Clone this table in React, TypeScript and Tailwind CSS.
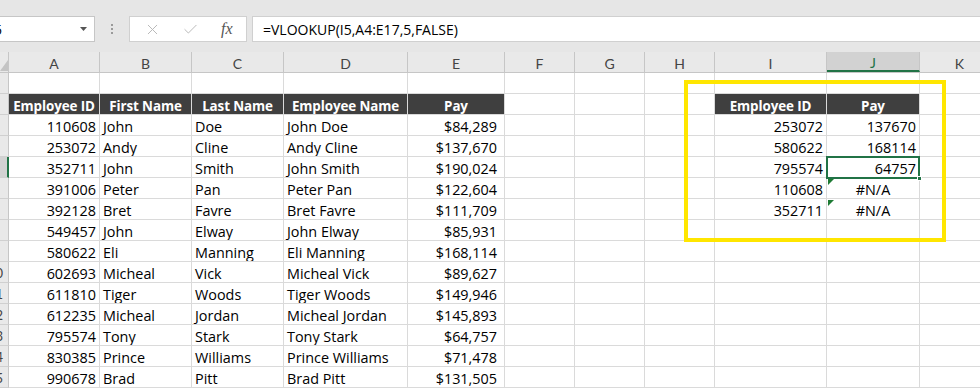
import { X, Check } from "lucide-react";

const data: (string | number)[][] = [
  [110608, "John", "Doe", "John Doe", "$84,289"],
  [253072, "Andy", "Cline", "Andy Cline", "$137,670"],
  [352711, "John", "Smith", "John Smith", "$190,024"],
  [391006, "Peter", "Pan", "Peter Pan", "$122,604"],
  [392128, "Bret", "Favre", "Bret Favre", "$111,709"],
  [549457, "John", "Elway", "John Elway", "$85,931"],
  [580622, "Eli", "Manning", "Eli Manning", "$168,114"],
  [602693, "Micheal", "Vick", "Micheal Vick", "$89,627"],
  [611810, "Tiger", "Woods", "Tiger Woods", "$149,946"],
  [612235, "Micheal", "Jordan", "Micheal Jordan", "$145,893"],
  [795574, "Tony", "Stark", "Tony Stark", "$64,757"],
  [830385, "Prince", "Williams", "Prince Williams", "$71,478"],
  [990678, "Brad", "Pitt", "Brad Pitt", "$131,505"],
];

const lookup: [number, string][] = [
  [253072, "137670"],
  [580622, "168114"],
  [795574, "64757"],
  [110608, "#N/A"],
  [352711, "#N/A"],
];

// column widths A..K
const widths = [
  "w-[91px]",
  "w-[92px]",
  "w-[92px]",
  "w-[124px]",
  "w-[97px]",
  "w-[70px]",
  "w-[70px]",
  "w-[70px]",
  "w-[112px]",
  "w-[93px]",
  "w-[80px]",
];
const letters = ["A", "B", "C", "D", "E", "F", "G", "H", "I", "J", "K"];

function Cell({
  col,
  text,
  kind,
}: {
  col: number;
  text?: string | number;
  kind?: "head" | "num" | "text" | "money" | "center";
}) {
  const base = `${widths[col]} shrink-0 h-full border-r border-b flex items-center pt-[4px] overflow-hidden whitespace-nowrap`;
  if (kind === "head") {
    return (
      <div className={`${base} border-[#d9d9d9] bg-[#3f3f3f] justify-center text-white font-bold text-[13.4px] tracking-[-0.1px]`}>
        {text}
      </div>
    );
  }
  let align = "justify-start pl-[3px]";
  if (kind === "num") align = "justify-end pr-[3px]";
  if (kind === "money") align = "justify-end pr-[7px]";
  if (kind === "center") align = "justify-center";
  return (
    <div className={`${base} border-[#dadada] text-[14.4px] text-black ${align}`}>
      {text}
    </div>
  );
}

function RowHead({ n, active }: { n: number; active?: boolean }) {
  return (
    <div
      className={`w-[9px] shrink-0 h-full border-b border-[#d0d0d0] overflow-hidden flex items-center pt-[3px] text-[13px] text-[#444] font-['Lato',sans-serif] ${
        active ? "bg-[#d2d2d2] border-r-2 border-r-[#217346]" : "bg-[#e9e9e9] border-r border-r-[#c6c6c6]"
      }`}
    >
      <span className="-ml-[12px]">{n}</span>
    </div>
  );
}

export default function App() {
  return (
    <div className="w-[980px] h-[388px] overflow-hidden bg-white font-['Open_Sans',sans-serif] select-none">
      {/* Formula bar */}
      <div className="h-[52px] bg-[#e6e6e6] border-t-[16px] border-[#e6e6e6] flex flex-col">
        <div className="h-[26px] flex items-stretch">
          <div className="w-[95px] bg-white border border-l-0 border-[#c6c6c6] flex items-center justify-between overflow-hidden">
            <span className="-ml-[6px] text-[14px] text-black">5</span>
            <svg width="7" height="4" viewBox="0 0 7 4" className="mr-[7px]">
              <path d="M0 0 L7 0 L3.5 4 Z" fill="#555" />
            </svg>
          </div>
          <div className="w-[34px] flex flex-col items-center justify-center gap-[2px]">
            <div className="w-[2px] h-[2px] bg-[#9a9a9a]" />
            <div className="w-[2px] h-[2px] bg-[#9a9a9a]" />
            <div className="w-[2px] h-[2px] bg-[#9a9a9a]" />
          </div>
          <div className="w-[118px] bg-white border border-[#d0d0d0] flex items-center">
            <X className="ml-[14px] text-[#b9b9b9]" size={17} strokeWidth={1.4} />
            <Check className="ml-[21px] text-[#b9b9b9]" size={17} strokeWidth={1.4} />
            <span className="ml-[22px] font-['Liberation_Serif',serif] italic text-[16px] text-[#555]">
              fx
            </span>
          </div>
          <div className="ml-[5px] flex-1 bg-white border border-r-0 border-[#d0d0d0] flex items-center pl-[10px] text-[14px] text-black">
            =VLOOKUP(I5,A4:E17,5,FALSE)
          </div>
        </div>
      </div>

      {/* Sheet */}
      <div className="relative">
        {/* column headers */}
        <div className="h-[21px] flex bg-[#e9e9e9] border-b border-[#c6c6c6] font-['Lato',sans-serif]">
          <div className="w-[9px] shrink-0 h-full border-r border-[#c6c6c6] relative overflow-hidden">
            <svg width="9" height="21" className="absolute left-0 top-0">
              <path d="M0 19 L8 19 L8 8 Z" fill="#c4c4c4" />
            </svg>
          </div>
          {letters.map((l, i) => (
            <div
              key={l}
              className={`${widths[i]} shrink-0 h-full flex items-center justify-center pt-[3px] text-[14px] ${
                i === 9
                  ? "bg-[#d2d2d2] border-b-2 border-[#217346] text-[#217346] border-r border-r-[#c6c6c6]"
                  : "text-[#444] border-r border-[#c6c6c6]"
              }`}
            >
              {l}
            </div>
          ))}
        </div>

        {/* row 1 blank */}
        <div className="h-[21px] flex">
          <RowHead n={1} />
          {letters.map((l, i) => (
            <Cell key={l} col={i} />
          ))}
        </div>

        {/* row 2 headers */}
        <div className="h-[21px] flex">
          <RowHead n={2} />
          <Cell col={0} text="Employee ID" kind="head" />
          <Cell col={1} text="First Name" kind="head" />
          <Cell col={2} text="Last Name" kind="head" />
          <Cell col={3} text="Employee Name" kind="head" />
          <Cell col={4} text="Pay" kind="head" />
          <Cell col={5} />
          <Cell col={6} />
          <Cell col={7} />
          <Cell col={8} text="Employee ID" kind="head" />
          <Cell col={9} text="Pay" kind="head" />
          <Cell col={10} />
        </div>

        {data.map((r, idx) => {
          const lk = lookup[idx];
          return (
            <div key={r[0]} className="h-[21px] flex">
              <RowHead n={idx + 3} active={idx === 2} />
              <Cell col={0} text={r[0]} kind="num" />
              <Cell col={1} text={r[1]} />
              <Cell col={2} text={r[2]} />
              <Cell col={3} text={r[3]} />
              <Cell col={4} text={r[4]} kind="money" />
              <Cell col={5} />
              <Cell col={6} />
              <Cell col={7} />
              <Cell col={8} text={lk ? lk[0] : undefined} kind="num" />
              <Cell
                col={9}
                text={lk ? lk[1] : undefined}
                kind={lk && lk[1] === "#N/A" ? "center" : "num"}
              />
              <Cell col={10} />
            </div>
          );
        })}

        {/* yellow highlight box */}
        <div className="absolute left-[684px] top-[28px] w-[262px] h-[162px] border-4 border-[#ffe600] pointer-events-none" />

        {/* active cell */}
        <div className="absolute left-[826px] top-[104px] w-[94px] h-[23px] border-2 border-[#217346]">
          <div className="absolute -right-[4px] -bottom-[4px] w-[5px] h-[5px] bg-[#217346] border border-white" />
        </div>

        {/* error indicators */}
        <svg width="6" height="6" className="absolute left-[828px] top-[127px]">
          <path d="M0 0 L6 0 L0 6 Z" fill="#1e7b34" />
        </svg>
        <svg width="6" height="6" className="absolute left-[828px] top-[148px]">
          <path d="M0 0 L6 0 L0 6 Z" fill="#1e7b34" />
        </svg>
      </div>
    </div>
  );
}
